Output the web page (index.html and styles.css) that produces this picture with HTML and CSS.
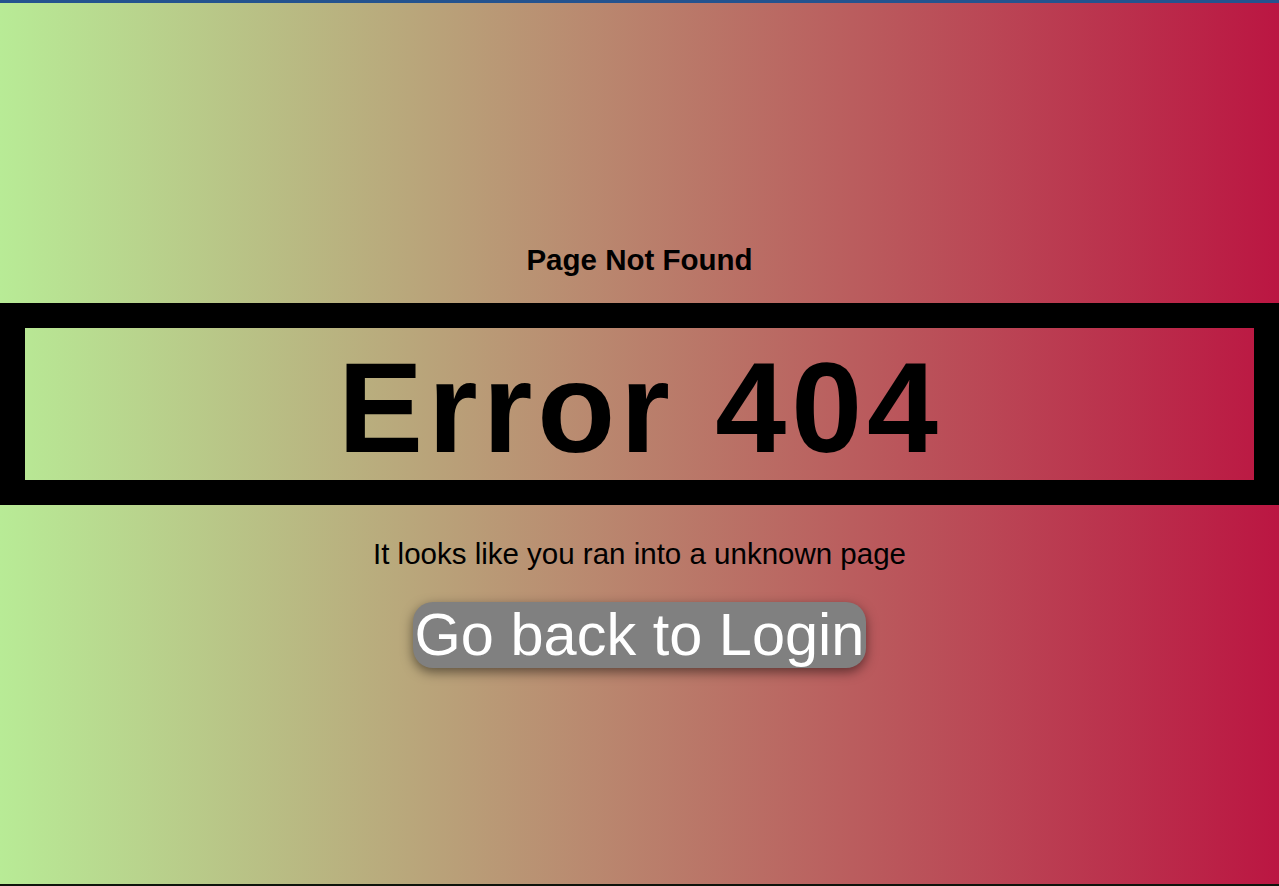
FILE: index.html
```html
<!DOCTYPE html>
<html lang="en">
<head>
<meta charset="utf-8">
<title>Page Not Found</title>
<link rel="stylesheet" href="styles.css">
</head>
<body>
<main class="page">
  <h2 class="subtitle">Page Not Found</h2>
  <div class="error-box">
    <h1 class="error-title">Error 404</h1>
  </div>
  <p class="message">It looks like you ran into a unknown page</p>
  <button class="back-btn" type="button">Go back to Login</button>
</main>
</body>
</html>
```

FILE: styles.css
```css
html, body {
  margin: 0;
  padding: 0;
}

body {
  height: 886px;
  box-sizing: border-box;
  border-top: 3px solid #24538f;
  border-bottom: 2px solid #0e140c;
  background: linear-gradient(to right, #b8eb96 0%, #bb1642 100%);
  font-family: "Liberation Sans", Arial, sans-serif;
  color: #000;
  overflow: hidden;
}

.page {
  display: flex;
  flex-direction: column;
  align-items: center;
  text-align: center;
  padding-top: 240px;
}

.subtitle {
  margin: 0;
  font-size: 29.5px;
  font-weight: bold;
  line-height: normal;
}

.error-box {
  align-self: stretch;
  margin-top: 26px;
  border: 25px solid #000;
  padding-top: 5px;
  height: 147px;
}

.error-title {
  margin: 0;
  padding-top: 2px;
  padding-left: 2px;
  font-size: 127.5px;
  font-weight: bold;
  letter-spacing: 5px;
  line-height: 1;
  height: 147px;
  display: flex;
  align-items: center;
  justify-content: center;
}

.message {
  margin: 32px 0 0;
  font-size: 29.5px;
  line-height: normal;
}

.back-btn {
  margin-top: 31px;
  padding: 0 2px;
  border: none;
  border-radius: 20px;
  background: #808080;
  color: #fff;
  font-family: "Liberation Sans", Arial, sans-serif;
  font-size: 59.5px;
  line-height: 66px;
  box-shadow: 0 4px 12px rgba(0, 0, 0, 0.5);
  cursor: pointer;
}
```
